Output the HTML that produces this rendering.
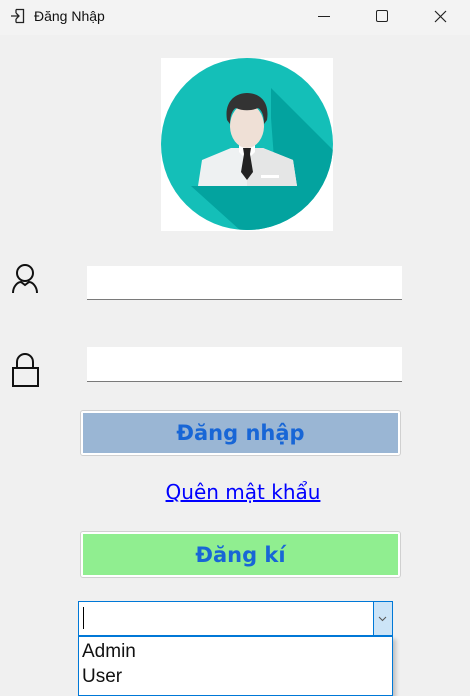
<!DOCTYPE html>
<html><head><meta charset="utf-8"><style>
*{margin:0;padding:0;box-sizing:border-box}
body{width:470px;height:687px;background:#f0f0f0;font-family:"Liberation Sans","DejaVu Sans",sans-serif;position:relative;overflow:hidden}
.a{position:absolute}
.tb{left:0;top:0;width:470px;height:35px;background:#f3f3f3}
.inp{background:#fff;border-bottom:1px solid #7a7a7a}
.btn{border:1px solid #d0d0d0;border-radius:3px;background:#fff;padding:2px}
.btn div{width:100%;height:100%;display:flex;align-items:center;justify-content:center;color:#1866d6;font-weight:bold;font-size:21px;font-family:"DejaVu Sans",sans-serif}
</style></head><body>
<div class="a tb">
<svg class="a" style="left:10px;top:8px" width="16" height="16" viewBox="0 0 16 16" fill="none" stroke="#222" stroke-width="1.3"><path d="M6 1.5h7.5v13H6M6 5v-3.5M6 11v3.5M1 8h8M6 5l3 3-3 3"/></svg>
<div class="a" style="left:34px;top:8px;font-size:14px;color:#111">Đăng Nhập</div>
<div class="a" style="left:318px;top:16px;width:12px;height:1px;background:#222"></div>
<div class="a" style="left:376px;top:10px;width:12px;height:12px;border:1.3px solid #222;border-radius:2px"></div>
<svg class="a" style="left:434px;top:10px" width="13" height="13" viewBox="0 0 13 13" stroke="#222" stroke-width="1.2"><path d="M1 1L12 12M12 1L1 12"/></svg>
</div>
<svg class="a" style="left:161px;top:58px" width="172" height="173" viewBox="0 0 172 173">
<rect width="172" height="173" fill="#fff"/>
<clipPath id="c"><circle cx="86" cy="86" r="86"/></clipPath>
<circle cx="86" cy="86" r="86" fill="#14bfb8"/>
<g clip-path="url(#c)"><path d="M110 30L180 100L180 173L80 173L30 128L115 128L110 60Z" fill="#03a39f"/></g>
<path d="M70 90h32l30 12 4 26H37l4-26z" fill="#eef1f2"/>
<path d="M86 90h16l30 12 4 26H86z" fill="#e5e6e6"/>
<path d="M78 84h16v10l-8 8-8-8z" fill="#fff"/>
<ellipse cx="86" cy="68" rx="17" ry="22" fill="#efe0d6"/>
<path d="M66 62c-3-18 8-27 20-27s23 8 20 27l-3 4c0-8-2-14-6-16-6 3-16 3-22 0-4 2-6 8-6 16z" fill="#333"/>
<path d="M82 90h8l-1 6 3 18-6 8-6-8 3-18z" fill="#222"/>
<rect x="100" y="117" width="18" height="3" fill="#fff"/>
</svg>
<svg class="a" style="left:11px;top:262px" width="30" height="32" viewBox="0 0 30 32" fill="none" stroke="#111" stroke-width="2"><circle cx="14" cy="11" r="8"/><path d="M2 31c0-7 5-11 8-11l4 3 4-3c3 0 8 4 8 11"/></svg>
<svg class="a" style="left:11px;top:352px" width="30" height="36" viewBox="0 0 30 36" fill="none" stroke="#111" stroke-width="2"><path d="M6 16V10a8 8 0 0 1 16 0v6"/><rect x="2" y="16" width="25" height="18"/></svg>
<div class="a inp" style="left:87px;top:266px;width:315px;height:34px"></div>
<div class="a inp" style="left:87px;top:347px;width:315px;height:35px"></div>
<div class="a btn" style="left:80px;top:410px;width:321px;height:46px"><div style="background:#9ab6d4">Đăng nhập</div></div>
<div class="a" style="left:0;width:486px;top:480px;text-align:center;font-size:20px;color:#0000ff;text-decoration:underline;font-family:'DejaVu Sans',sans-serif">Quên mật khẩu</div>
<div class="a btn" style="left:80px;top:531px;width:321px;height:47px"><div style="background:#90ee90">Đăng kí</div></div>
<div class="a" style="left:78px;top:601px;width:315px;height:35px;background:#fff;border:1px solid #0078d7">
<div class="a" style="left:4px;top:5px;width:1px;height:22px;background:#000"></div>
<div class="a" style="right:0;top:0;width:19px;height:33px;background:#cce4f7;border-left:1px solid #0078d7"></div>
<svg class="a" style="right:5px;top:14px" width="9" height="6" viewBox="0 0 9 6" fill="none" stroke="#555"><path d="M1 1l3.5 3.5L8 1"/></svg>
</div>
<div class="a" style="left:78px;top:636px;width:315px;height:60px;background:#fff;border:1px solid #0078d7;font-size:19px;color:#111;padding-left:3px;padding-top:2px;line-height:25px;box-shadow:3px 3px 4px rgba(0,0,0,.2)"><div>Admin</div><div>User</div></div>
</body></html>
